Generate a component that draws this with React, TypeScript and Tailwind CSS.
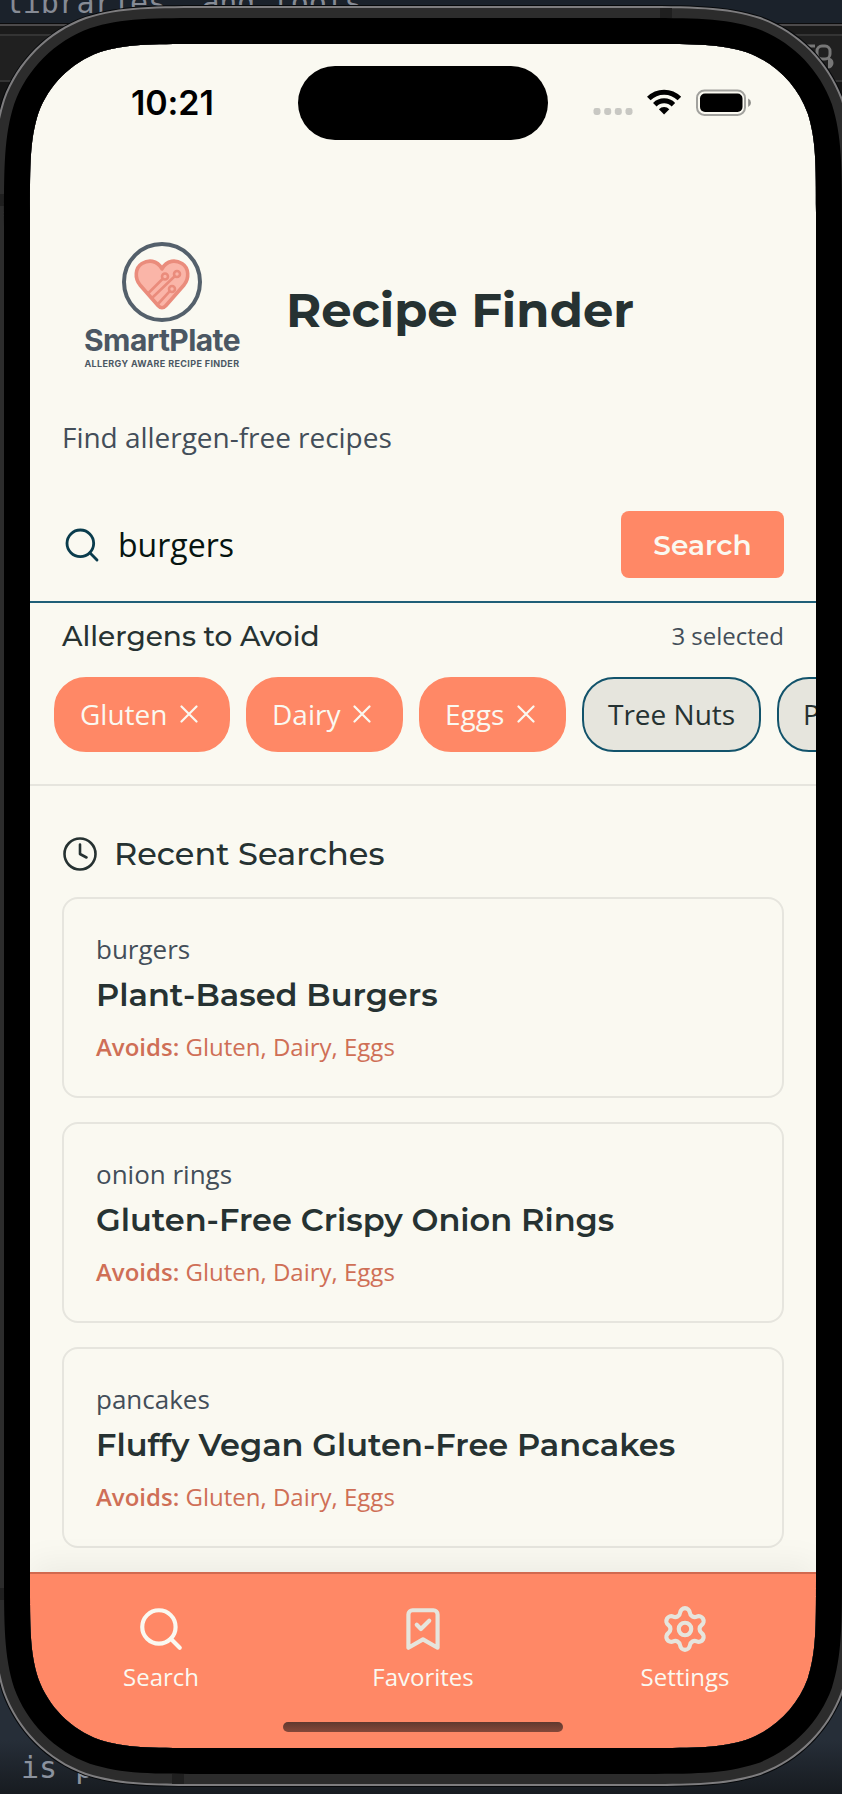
import React from "react";

const HEAD = "font-[Montserrat,Inter,sans-serif]";

function corner(x: number, y: number, w: number, h: number, r: number) {
  const a = 1.52866483 * r, b = 1.08849296 * r, c = 0.86840694 * r, d = 0.63149379 * r;
  const e = 0.07491139 * r, f = 0.37282383 * r, g = 0.16905956 * r;
  const R = x + w, B = y + h;
  return [
    `M${x + a} ${y}L${R - a} ${y}`,
    `C${R - b} ${y} ${R - c} ${y} ${R - d} ${y + e}`,
    `C${R - f} ${y + g} ${R - g} ${y + f} ${R - e} ${y + d}`,
    `C${R} ${y + c} ${R} ${y + b} ${R} ${y + a}`,
    `L${R} ${B - a}`,
    `C${R} ${B - b} ${R} ${B - c} ${R - e} ${B - d}`,
    `C${R - g} ${B - f} ${R - f} ${B - g} ${R - d} ${B - e}`,
    `C${R - c} ${B} ${R - b} ${B} ${R - a} ${B}`,
    `L${x + a} ${B}`,
    `C${x + b} ${B} ${x + c} ${B} ${x + d} ${B - e}`,
    `C${x + f} ${B - g} ${x + g} ${B - f} ${x + e} ${B - d}`,
    `C${x} ${B - c} ${x} ${B - b} ${x} ${B - a}`,
    `L${x} ${y + a}`,
    `C${x} ${y + b} ${x} ${y + c} ${x + e} ${y + d}`,
    `C${x + g} ${y + f} ${x + f} ${y + g} ${x + d} ${y + e}`,
    `C${x + c} ${y} ${x + b} ${y} ${x + a} ${y}Z`,
  ].join("");
}

const ring = (inset: number) => corner(-8 + inset, 6 + inset, 862 - inset * 2, 1780 - inset * 2, 148 - inset);

function Bezel() {
  const hole = ring(38);
  return (
    <svg className="pointer-events-none absolute inset-0" width="842" height="1794" viewBox="0 0 842 1794" fillRule="evenodd">
      <path d={ring(-1) + hole} fill="#07090b" />
      <path d={ring(0) + hole} fill="#7e7d7f" />
      <path d={ring(2) + hole} fill="#2c2c2c" />
      <path d="M660 8h12v10h-12zM172 1774h12v10h-12zM0 194h4v12h-4zM0 1588h4v12h-4z" fill="#1f1f1f" />
      <path d={ring(12) + hole} fill="#000" />
    </svg>
  );
}

function StatusBar() {
  return (
    <div className="flex h-[118px] items-start pl-[101px] pr-[65px]">
      <div className="mt-[39px] w-[90px] font-[Inter,sans-serif] text-[34px] font-semibold leading-[40px] tracking-[-0.1px] text-black">10:21</div>
      <div className="ml-[77px] mt-[22px] h-[74px] w-[250px] shrink-0 rounded-full bg-black" />
      <svg className="ml-auto mt-[43px]" width="160" height="30" viewBox="0 0 160 30">
        <g fill="#c8c8c3">
          <rect x="2.5" y="21" width="7" height="7" rx="2.4" />
          <rect x="13.2" y="21" width="7" height="7" rx="2.4" />
          <rect x="23.8" y="21" width="7" height="7" rx="2.4" />
          <rect x="34.5" y="21" width="7" height="7" rx="2.4" />
        </g>
        <g fill="none" stroke="#000" strokeWidth="5">
          <path d="M57.8 11.6A21.5 21.5 0 0 1 88.4 11.6" />
          <path d="M63.8 17.7A13.2 13.2 0 0 1 82.4 17.7" />
        </g>
        <path d="M67.9 22.2A7.4 7.4 0 0 1 78.3 22.2L73.1 27.6Z" fill="#000" />
        <rect x="106" y="3.500" width="48" height="24.5" rx="7.5" fill="none" stroke="#a2a29e" strokeWidth="2" />
        <rect x="109" y="6.500" width="42.5" height="18.5" rx="5" fill="#000" />
        <path d="M157.200 11.500v8.500q2.800-1.500 2.800-4.250t-2.800-4.250z" fill="#8c8c88" />
      </svg>
    </div>
  );
}

function Logo() {
  return (
    <div className="flex w-[158px] flex-col items-center text-[#4b5763]">
      <svg className="mr-[2px]" width="80" height="80" viewBox="0 0 80 80" fill="none">
        <circle cx="40" cy="40" r="38" stroke="#54606b" strokeWidth="4" />
        <path d="M40 27C35 17.500 26 18 20 21.500C13 26 12.500 36 18 43L36 63.500Q40 68 44 63.500L62 43C67.500 36 67 26 60 21.500C54 18 45 17.500 40 27Z" fill="#fab5a8" stroke="#ea8c7c" strokeWidth="3.600" strokeLinejoin="round" />
        <g stroke="#ea8c7c" strokeWidth="2.600">
          <circle cx="43" cy="34.500" r="3" />
          <circle cx="55" cy="32" r="3" />
          <circle cx="50" cy="47" r="3" />
          <path d="M40.500 37L26 51.500M52.700 34.200L30 56M47.800 49.200L36 62" />
        </g>
      </svg>
      <div className="mr-[2px] whitespace-nowrap font-[Inter,sans-serif] text-[30px] font-bold leading-[36px] tracking-[-0.6px]">SmartPlate</div>
      <div className="mr-[2px] whitespace-nowrap font-[Inter,sans-serif] text-[9px] font-bold leading-[12px] tracking-[0.37px]">ALLERGY AWARE RECIPE FINDER</div>
    </div>
  );
}

function SearchIcon({ size, width, className }: { size: number; width: number; className?: string }) {
  return (
    <svg className={className} width={size} height={size} viewBox="0 0 24 24" fill="none" stroke="currentColor" strokeWidth={width} strokeLinecap="round">
      <circle cx="11" cy="11" r="8" />
      <path d="m21 21-4.300-4.300" />
    </svg>
  );
}

function Chip({ label, on, width }: { label: string; on?: boolean; width: string }) {
  return (
    <div className={`flex h-[75px] shrink-0 items-center rounded-[32px] border-2 pb-px pl-[24px] text-[28px] ${width} ${on ? "border-[#ff8866] bg-[#ff8866] text-[#faf9f1]" : "border-[#12536b] bg-[#e6e5dd] text-[#263232]"}`}>
      <span className="whitespace-nowrap">{label}</span>
      {on && (
        <svg className="ml-[13px]" width="18" height="18" viewBox="0 0 18 18" fill="none" stroke="currentColor" strokeWidth="2.200" strokeLinecap="round">
          <path d="M1.500 1.500l15 15M16.500 1.500l-15 15" />
        </svg>
      )}
    </div>
  );
}

function Card({ query, title }: { query: string; title: string }) {
  return (
    <div className="h-[201px] rounded-[16px] border-2 border-[#e6e5de] px-8 pt-[31px]">
      <div className="text-[26px] leading-[38px] text-[#434e59]">{query}</div>
      <div className={`${HEAD} mt-[6px] whitespace-nowrap text-[32px] font-semibold leading-[42px] text-[#263232]`}>{title}</div>
      <div className="mt-[14px] whitespace-nowrap text-[24px] leading-[34px] text-[#cf6f56]">
        <span className="font-semibold">Avoids:</span> Gluten, Dairy, Eggs
      </div>
    </div>
  );
}

function NavBar() {
  return (
    <div className="relative h-[176px] border-t-2 border-[#d1694f] bg-[#ff8866] shadow-[0_-8px_32px_rgba(0,0,0,0.06)]">
      <div className="grid grid-cols-3 pt-[30px] text-[24px] leading-[34px] text-[#faf9f1]">
        <div className="flex flex-col items-center">
          <SearchIcon size={50} width={2} />
          <span className="mt-[6px]">Search</span>
        </div>
        <div className="flex flex-col items-center">
          <svg width="50" height="50" viewBox="0 0 24 24" fill="none" stroke="#e6e5dd" strokeWidth="2" strokeLinecap="round" strokeLinejoin="round">
            <path d="m19 21-7-4-7 4V5a2 2 0 0 1 2-2h10a2 2 0 0 1 2 2v16z" />
            <path d="m9 10 2 2 4-4" />
          </svg>
          <span className="mt-[6px]">Favorites</span>
        </div>
        <div className="flex flex-col items-center">
          <svg width="50" height="50" viewBox="0 0 24 24" fill="none" stroke="#e6e5dd" strokeWidth="2" strokeLinecap="round" strokeLinejoin="round">
            <path d="M9.671 4.136a2.340 2.340 0 0 1 4.659 0 2.340 2.340 0 0 0 3.319 1.915 2.340 2.340 0 0 1 2.330 4.033 2.340 2.340 0 0 0 0 3.831 2.340 2.340 0 0 1-2.330 4.033 2.340 2.340 0 0 0-3.319 1.915 2.340 2.340 0 0 1-4.659 0 2.340 2.340 0 0 0-3.320-1.915 2.340 2.340 0 0 1-2.330-4.033 2.340 2.340 0 0 0 0-3.831A2.340 2.340 0 0 1 6.350 6.051a2.340 2.340 0 0 0 3.319-1.915" />
            <circle cx="12" cy="12" r="3" />
          </svg>
          <span className="mt-[6px]">Settings</span>
        </div>
      </div>
      <div className="absolute bottom-[16px] left-[253px] h-[10px] w-[280px] rounded-full bg-linear-to-b from-[#5f392f] to-[#854839]" />
    </div>
  );
}

export default function App() {
  return (
    <div className="relative h-[1794px] w-[842px] overflow-hidden bg-[linear-gradient(#1b222b_0,#1b222b_23px,#0c0c0d_23px,#0c0c0d_24px,#4c4a4b_24px,#4c4a4b_26px,#1b1b1b_26px,#1b1b1b_34px,#343434_34px,#343434_36px,#202020_36px,#202020_80px,#343434_80px,#343434_82px,#161616_82px,#161616_1600px,#262e38_1680px,#262e38_1740px,#171b20_1794px)] font-['Open_Sans',sans-serif]">
      <div className="absolute left-[5px] top-[-14px] whitespace-pre font-['DejaVu_Sans_Mono',monospace] text-[30px] leading-[34px] tracking-[-0.2px] text-[#868b95]">libraries, and tools</div>
      <div className="absolute left-[21px] top-[1751px] font-['DejaVu_Sans_Mono',monospace] text-[30px] leading-[34px] text-[#8b929e]">is p</div>
      <svg className="absolute left-[806px] top-[42px]" width="30" height="30" viewBox="0 0 30 30" fill="none" stroke="#777" strokeWidth="3">
        <rect x="11" y="4" width="13" height="13" rx="5" />
        <path d="M22 17a4 4 0 0 1 0 8" fill="#777" />
        <path d="M0 4h9" />
      </svg>
      <div className="flex h-full w-full pl-[30px] pt-[44px]">
        <div className="flex h-[1704px] w-[786px] flex-col overflow-hidden rounded-[100px] bg-[#faf9f1]">
          <StatusBar />
          <div className="flex h-[262px] items-center pl-[54px] pt-[3px]">
            <div className="pt-[23px]"><Logo /></div>
            <h1 className={`${HEAD} ml-[44px] whitespace-nowrap pt-[30px] text-[48px] font-bold leading-[60px] text-[#263232]`}>Recipe Finder</h1>
          </div>
          <div className="h-[75px] pl-[32px] text-[28px] leading-[40px] tracking-[-0.03px] text-[#434e59]">
            <div className="mt-[-7px]">Find allergen-free recipes</div>
          </div>
          <div className="flex h-[104px] items-center border-b-2 border-[#1f5f78] px-[32px] pb-[11px]">
            <SearchIcon size={40} width={1.7} className="text-[#0a3c4d]" />
            <span className="ml-[16px] text-[32px] text-[#061410]">burgers</span>
            <div className={`${HEAD} ml-auto flex h-[67px] w-[163px] items-center justify-center rounded-[8px] bg-[#ff8866] text-[28px] font-semibold text-[#faf9f1]`}>Search</div>
          </div>
          <div className="flex h-[183px] flex-col border-b-2 border-[#e6e5de]">
            <div className="flex h-[74px] items-center justify-between px-[32px] pb-[8px]">
              <span className={`${HEAD} text-[28px] font-medium text-[#263232]`}>Allergens to Avoid</span>
              <span className="text-[24px] text-[#434e59]">3 selected</span>
            </div>
            <div className="flex gap-4 overflow-hidden pl-[24px]">
              <Chip label="Gluten" on width="w-[176px]" />
              <Chip label="Dairy" on width="w-[157px]" />
              <Chip label="Eggs" on width="w-[147px]" />
              <Chip label="Tree Nuts" width="w-[179px]" />
              <Chip label="Peanuts" width="w-[160px]" />
            </div>
          </div>
          <div className="flex h-[111px] items-center pl-[32px] pt-[25px]">
            <svg width="36" height="36" viewBox="0 0 36 36" fill="none" stroke="#263232" strokeWidth="2.600" strokeLinecap="round" strokeLinejoin="round">
              <circle cx="18" cy="18" r="15.500" />
              <path d="M18 8.500V18l6.500 3.500" />
            </svg>
            <span className={`${HEAD} ml-[16px] text-[32px] font-medium text-[#263232]`}>Recent Searches</span>
          </div>
          <div className="flex h-[675px] flex-col gap-6 px-[32px]">
            <Card query="burgers" title="Plant-Based Burgers" />
            <Card query="onion rings" title="Gluten-Free Crispy Onion Rings" />
            <Card query="pancakes" title="Fluffy Vegan Gluten-Free Pancakes" />
          </div>
          <NavBar />
        </div>
      </div>
      <Bezel />
    </div>
  );
}
